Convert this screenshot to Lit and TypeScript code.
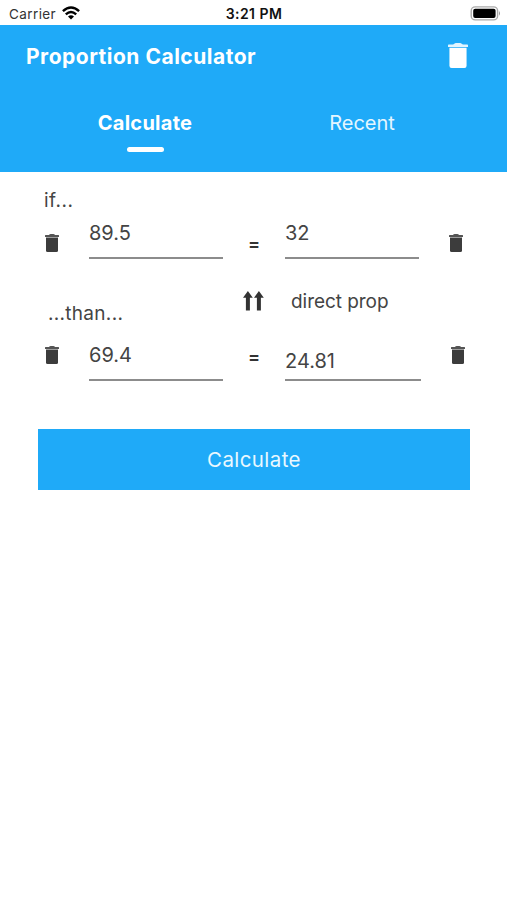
import { LitElement, html, css, svg } from "lit";
import { customElement, property } from "lit/decorators.js";

@customElement("trash-icon")
class TrashIcon extends LitElement {
  static styles = css`
    :host { display: block; width: 14px; height: 18px; }
    svg { display: block; width: 100%; height: 100%; }
  `;
  render() {
    return html`<svg viewBox="0 0 14 18" preserveAspectRatio="none" fill="currentColor">
      <path d="M0 1.6Q0 1.1.5 1.1H3.4Q4 1 4.4.5Q4.8 0 5.6 0H8.4Q9.2 0 9.6.5Q10 1 10.6 1.1H13.5Q14 1.1 14 1.6V2.9H0Z" opacity=".88" />
      <path d="M1 3.5H13V16.4Q13 18 11.5 18H2.5Q1 18 1 16.4Z" />
    </svg>`;
  }
}

@customElement("value-field")
class ValueField extends LitElement {
  @property() value = "";
  static styles = css`
    :host { display: block; box-sizing: border-box; border-bottom: 2px solid #8c8c8c; }
    span { display: block; font-size: 20px; line-height: 24px; }
  `;
  render() {
    return html`<span>${this.value}</span>`;
  }
}

@customElement("app-root")
class AppRoot extends LitElement {
  static styles = css`
    :host {
      display: block; height: 900px; background: #fff; color: #444;
      font-family: Inter, "Liberation Sans", sans-serif; font-size: 20px; line-height: 24px;
      overflow: hidden; white-space: nowrap;
    }
    .status { display: grid; grid-template-columns: 1fr auto 1fr; height: 25px; padding: 2px 6px 0 9px; align-items: center; color: #111; line-height: 16px; box-sizing: border-box; }
    .carrier { display: flex; align-items: center; gap: 6px; font-size: 13.5px; color: #333; letter-spacing: .4px; }
    .wifi { width: 18px; height: 14px; margin-top: -2px; }
    .time { font-size: 14px; font-weight: 600; letter-spacing: .45px; margin-right: 2px; }
    .battery { justify-self: end; width: 31px; height: 15px; margin-top: -1px; }
    header { height: 147px; background: #1faaf8; color: #fff; box-sizing: border-box; padding-top: 18px; }
    .bar { display: flex; justify-content: space-between; padding: 0 39px 0 26px; height: 26px; }
    .title { font-weight: 700; font-size: 21px; line-height: 28px; letter-spacing: .5px; }
    .bar trash-icon { width: 20px; height: 25px; color: #fff; }
    .tabs { display: grid; grid-template-columns: 145px 145px; justify-content: center; column-gap: 72px; padding-top: 42px; }
    .tab { display: flex; flex-direction: column; align-items: center; color: #e4f6ff; }
    .tab.on { font-weight: 700; color: #fff; letter-spacing: .28px; }
    .mark { width: 37px; height: 5px; border-radius: 3px; background: #fff; margin-top: 12px; }
    .if { padding: 17px 0 0 44px; height: 24px; font-size: 19px; letter-spacing: .5px; }
    .row { display: grid; padding-left: 45px; align-items: start; }
    .row value-field { width: 134px; height: 38px; }
    .one { margin-top: 8px; grid-template-columns: 44px 159px 37px 163.5px 14px; }
    .two { margin-top: 17px; grid-template-columns: 44px 159px 37px 166px 14px; }
    .one trash-icon { margin-top: 12.5px; }
    .two trash-icon { margin-top: 3px; }
    .eq { font-size: 18px; font-weight: 600; line-height: 20px; color: #333; }
    .one .eq { margin-top: 13px; }
    .two .eq { margin-top: 4px; }
    .row.two .result { width: 136px; padding-top: 6px; }
    trash-icon { color: #3c3c3c; }
    .middle { display: grid; grid-template-columns: 195px 48px auto; padding: 29px 0 0 48px; align-items: start; }
    .than { padding-top: 14px; font-size: 19px; letter-spacing: .3px; }
    .arrows { width: 21px; height: 20px; margin-top: 3px; }
    .direct { font-size: 19px; padding-top: 2px; letter-spacing: -.05px; }
    .go { display: flex; align-items: center; justify-content: center; width: 432px; height: 61px; margin: 48px 0 0 38px; background: #1faaf8; color: #e9f8ff; font: inherit; font-size: 20.5px; letter-spacing: .4px; border: 0; padding: 0; }
  `;
  render() {
    const arrow = (x: number) => svg`<path transform="translate(${x} 0)" d="M4.9 0L9.8 6.8H6.9V19.5H2.9V6.8H0Z"/>`;
    return html`
      <div class="status">
        <div class="carrier"><span>Carrier</span>
          <svg class="wifi" viewBox="0 0 18 14" fill="none" stroke="#000" stroke-width="2.4">
            <path d="M.9 5.2Q9-2.4 17.1 5.2M3.8 8.3Q9 3.5 14.2 8.3"/>
            <path d="M9 13.5L6 10.5Q9 8.1 12 10.5Z" fill="#000" stroke="none"/>
          </svg>
        </div>
        <div class="time">3:21 PM</div>
        <svg class="battery" viewBox="0 0 31 15">
          <rect x="1.2" y=".9" width="26.4" height="13" rx="4" fill="#fff" stroke="#aaa" stroke-width="1.4"/>
          <rect x="3.2" y="2.8" width="22.4" height="9.2" rx="2" fill="#000"/>
          <path d="M29 5Q31 7.4 29 9.8Z" fill="#999"/>
        </svg>
      </div>
      <header>
        <div class="bar"><div class="title">Proportion Calculator</div><trash-icon></trash-icon></div>
        <nav class="tabs">
          <div class="tab on"><span>Calculate</span><i class="mark"></i></div>
          <div class="tab"><span>Recent</span></div>
        </nav>
      </header>
      <main>
        <div class="if">if...</div>
        <div class="row one">
          <trash-icon></trash-icon><value-field value="89.5"></value-field><span class="eq">=</span>
          <value-field value="32"></value-field><trash-icon></trash-icon>
        </div>
        <div class="middle">
          <span class="than">...than...</span>
          <svg class="arrows" viewBox="0 0 21 20" fill="#333">${arrow(0)}${arrow(11)}</svg>
          <span class="direct">direct prop</span>
        </div>
        <div class="row two">
          <trash-icon></trash-icon><value-field value="69.4"></value-field><span class="eq">=</span>
          <value-field class="result" value="24.81"></value-field><trash-icon></trash-icon>
        </div>
        <button class="go">Calculate</button>
      </main>`;
  }
}
